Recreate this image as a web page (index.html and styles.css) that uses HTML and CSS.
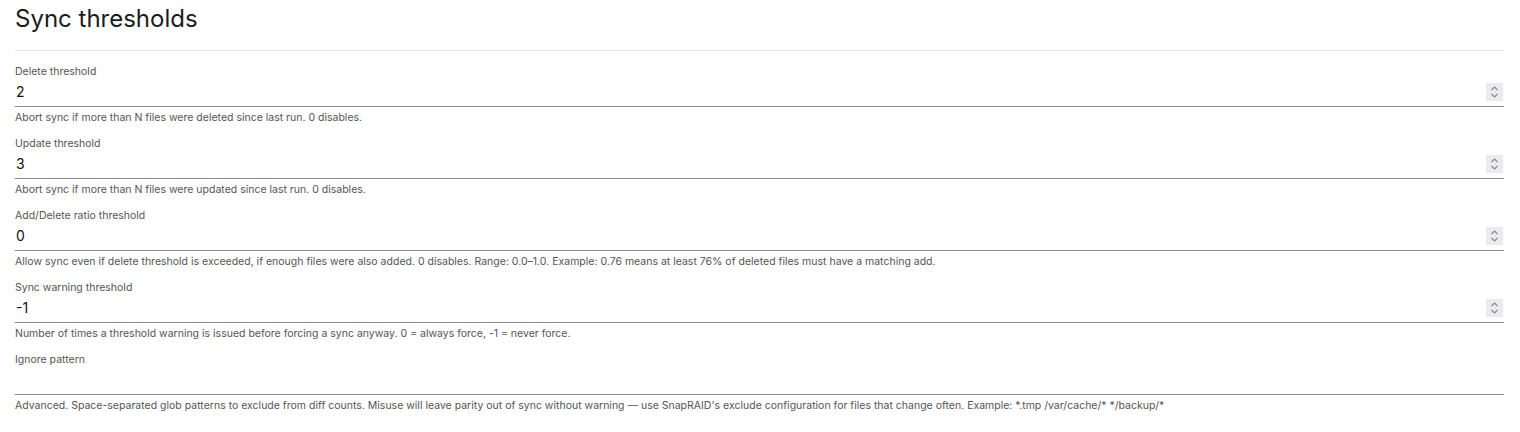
FILE: index.html
```html
<!DOCTYPE html>
<html lang="en">
<head>
<meta charset="utf-8">
<title>Sync thresholds</title>
<link rel="stylesheet" href="styles.css">
</head>
<body>
<div class="page">
  <h2 class="title">Sync thresholds</h2>
  <hr class="rule">
  <div class="field">
    <label class="label" for="f1">Delete threshold</label>
    <div class="control">
      <input class="input" id="f1" type="text" inputmode="numeric" value="2">
      <span class="spin"><svg viewBox="0 0 17 18" width="17" height="18"><path d="M5.5 7 L8.5 4 L11.5 7 M5.5 11 L8.5 14 L11.5 11" fill="none" stroke="#8a8a90" stroke-width="1.2"/></svg></span>
    </div>
    <p class="help">Abort sync if more than N files were deleted since last run. 0 disables.</p>
  </div>
  <div class="field">
    <label class="label" for="f2">Update threshold</label>
    <div class="control">
      <input class="input" id="f2" type="text" inputmode="numeric" value="3">
      <span class="spin"><svg viewBox="0 0 17 18" width="17" height="18"><path d="M5.5 7 L8.5 4 L11.5 7 M5.5 11 L8.5 14 L11.5 11" fill="none" stroke="#8a8a90" stroke-width="1.2"/></svg></span>
    </div>
    <p class="help">Abort sync if more than N files were updated since last run. 0 disables.</p>
  </div>
  <div class="field">
    <label class="label" for="f3">Add/Delete ratio threshold</label>
    <div class="control">
      <input class="input" id="f3" type="text" inputmode="decimal" value="0">
      <span class="spin"><svg viewBox="0 0 17 18" width="17" height="18"><path d="M5.5 7 L8.5 4 L11.5 7 M5.5 11 L8.5 14 L11.5 11" fill="none" stroke="#8a8a90" stroke-width="1.2"/></svg></span>
    </div>
    <p class="help">Allow sync even if delete threshold is exceeded, if enough files were also added. 0 disables. Range: 0.0–1.0. Example: 0.76 means at least 76% of deleted files must have a matching add.</p>
  </div>
  <div class="field">
    <label class="label" for="f4">Sync warning threshold</label>
    <div class="control">
      <input class="input" id="f4" type="text" inputmode="numeric" value="-1">
      <span class="spin"><svg viewBox="0 0 17 18" width="17" height="18"><path d="M5.5 7 L8.5 4 L11.5 7 M5.5 11 L8.5 14 L11.5 11" fill="none" stroke="#8a8a90" stroke-width="1.2"/></svg></span>
    </div>
    <p class="help">Number of times a threshold warning is issued before forcing a sync anyway. 0 = always force, -1 = never force.</p>
  </div>
  <div class="field">
    <label class="label" for="f5">Ignore pattern</label>
    <div class="control">
      <input class="input" id="f5" type="text" value="">
    </div>
    <p class="help">Advanced. Space-separated glob patterns to exclude from diff counts. Misuse will leave parity out of sync without warning — use SnapRAID's exclude configuration for files that change often. Example: *.tmp /var/cache/* */backup/*</p>
  </div>
</div>
</body>
</html>
```
FILE: styles.css
```css
html, body {
  margin: 0;
  padding: 0;
  background: #ffffff;
}
body {
  font-family: Inter, "Noto Sans", sans-serif;
  color: #1a1a1a;
}
.page {
  padding: 0 16px 0 15px;
}
.title {
  margin: 0;
  padding-top: 4px;
  font-size: 24px;
  font-weight: 400;
  line-height: 30px;
  color: #1c1c1c;
}
.rule {
  margin: 16px 0 1px 0;
  border: 0;
  border-top: 1px solid #e2e2e2;
  height: 0;
}
.field {
  display: flex;
  flex-direction: column;
  padding-top: 12px;
}
.field:first-of-type {
  padding-top: 13px;
}
.label {
  font-size: 10.5px;
  line-height: 14px;
  color: #555555;
}
.control {
  margin-top: 2px;
  height: 26px;
  box-sizing: border-box;
  padding-bottom: 4px;
  display: flex;
  align-items: center;
  border-bottom: 1px solid #8c8c8c;
}
.input {
  flex: 1;
  min-width: 0;
  height: 20px;
  padding: 0 1px;
  border: 0;
  font-family: Inter, "Noto Sans", sans-serif;
  font-size: 14px;
  color: #111111;
  background: transparent;
  outline: none;
}
.spin {
  width: 17px;
  height: 18px;
  margin-right: 1px;
  display: flex;
  align-items: center;
  justify-content: center;
  background: #ebebed;
}
.spin svg {
  display: block;
}
.help {
  margin: 4px 0 0 0;
  font-size: 10.5px;
  line-height: 14px;
  color: #555555;
}
```
